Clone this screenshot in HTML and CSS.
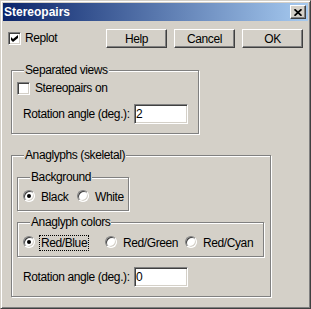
FILE: index.html
```html
<!DOCTYPE html>
<html lang="en">
<head>
  <meta charset="UTF-8" />
  <title>Stereopairs</title>
  <link rel="stylesheet" href="styles.css">
</head>
<body>

  <div class="window">
    <!-- title bar -->
    <div class="titlebar">
      <span class="title">Stereopairs</span>
      <button class="close">
        <svg width="8" height="7" viewBox="0 0 8 7">
          <path d="M0.5 0.3 L7.5 6.7 M7.5 0.3 L0.5 6.7" stroke="#000" stroke-width="1.8" fill="none" />
        </svg>
      </button>
    </div>

    <!-- replot + buttons -->
    <div class="top-row">
      <label class="check">
        <span class="box">
          <svg width="7" height="7" viewBox="0 0 7 7"><path d="M0 2 L2 4 L7 0 L7 3 L2 7 L0 5 Z" fill="#000" /></svg>
        </span>
        <span>Replot</span>
      </label>
      <div class="actions">
        <button class="btn">Help</button>
        <button class="btn">Cancel</button>
        <button class="btn">OK</button>
      </div>
    </div>

    <!-- separated views -->
    <div class="group sep">
      <div class="group-title">Separated views</div>
      <label class="check stereo">
        <span class="box"></span>
        <span>Stereopairs on</span>
      </label>
      <div class="field">
        <span>Rotation angle (deg.):</span>
        <input class="edit" type="text" value="2" readonly>
      </div>
    </div>

    <!-- anaglyphs -->
    <div class="group ana">
      <div class="group-title">Anaglyphs (skeletal)</div>

      <div class="group sub bg">
        <div class="group-title">Background</div>
        <div class="radios">
          <div class="opt"><span class="radio on"></span><span class="lbl">Black</span></div>
          <div class="opt"><span class="radio"></span><span class="lbl">White</span></div>
        </div>
      </div>

      <div class="group sub colors">
        <div class="group-title">Anaglyph colors</div>
        <div class="radios">
          <div class="opt"><span class="radio on"></span><span class="lbl focus">Red/Blue</span></div>
          <div class="opt"><span class="radio"></span><span class="lbl">Red/Green</span></div>
          <div class="opt"><span class="radio"></span><span class="lbl">Red/Cyan</span></div>
        </div>
      </div>

      <div class="field low">
        <span>Rotation angle (deg.):</span>
        <input class="edit" type="text" value="0" readonly>
      </div>
    </div>
  </div>

</body>
</html>
```

FILE: styles.css
```css
* {
  box-sizing: border-box;
}

body {
  margin: 0;
  font-family: "Liberation Sans", Arial, sans-serif;
  font-size: 12px;
  letter-spacing: -0.4px;
  color: #000;
  background: #d4d0c8;
}

/* window frame */
.window {
  width: 311px;
  height: 309px;
  background: #d4d0c8;
  border: 1px solid;
  border-color: #d4d0c8 #404040 #404040 #d4d0c8;
  box-shadow: inset 1px 1px #fff, inset -1px -1px #808080;
  padding: 2px;
}

.titlebar {
  height: 18px;
  display: flex;
  align-items: center;
  justify-content: space-between;
  padding: 0 2px 0 1px;
  background: linear-gradient(to right, #0a246a, #a6caf0);
  color: #fff;
}

.title {
  font-weight: bold;
  letter-spacing: 0;
  line-height: 18px;
}

.close {
  width: 16px;
  height: 14px;
  padding: 0;
  display: flex;
  align-items: center;
  justify-content: center;
  background: #d4d0c8;
  border: 1px solid;
  border-color: #fff #404040 #404040 #fff;
  box-shadow: inset -1px -1px #808080;
}

/* first row */
.top-row {
  display: flex;
  align-items: center;
  justify-content: space-between;
  height: 19px;
  margin-top: 8px;
  padding: 0 5px;
}

.actions {
  display: flex;
  gap: 7px;
}

.btn {
  width: 61px;
  height: 19px;
  padding: 0;
  font: inherit;
  letter-spacing: inherit;
  color: #000;
  background: #d4d0c8;
  border: 1px solid;
  border-color: #fff #404040 #404040 #fff;
  box-shadow: inset -1px -1px #808080;
}

/* checkbox */
.check {
  display: flex;
  align-items: center;
  gap: 4px;
  line-height: 13px;
}

.box {
  width: 13px;
  height: 13px;
  display: flex;
  align-items: center;
  justify-content: center;
  background: #fff;
  border: 1px solid;
  border-color: #808080 #fff #fff #808080;
  box-shadow: inset 1px 1px #404040, inset -1px -1px #d4d0c8;
}

/* group boxes */
.group {
  border: 1px solid #808080;
  box-shadow: inset 1px 1px #fff, 1px 1px #fff;
}

.group-title {
  width: max-content;
  margin: -7px 0 0 7px;
  padding: 0 1px;
  background: #d4d0c8;
  line-height: 13px;
}

.sep {
  width: 188px;
  margin: 22px 0 0 8px;
  padding: 0 0 9px 5px;
}

.stereo {
  margin-top: 5px;
  gap: 5px;
}

.field {
  display: flex;
  align-items: center;
  justify-content: space-between;
  width: 165px;
  margin: 9px 0 0 6px;
}

.field.low {
  margin-top: 10px;
}

.edit {
  width: 54px;
  height: 20px;
  padding: 0 1px;
  font: inherit;
  letter-spacing: 0;
  background: #fff;
  border: 1px solid;
  border-color: #808080 #fff #fff #808080;
  box-shadow: inset 1px 1px #404040, inset -1px -1px #d4d0c8;
  outline: none;
}

.ana {
  width: 260px;
  margin: 21px 0 0 8px;
  padding: 0 0 9px 5px;
}

.sub {
  padding: 0 0 5px 5px;
}

.bg {
  width: 112px;
  margin-top: 15px;
}

.colors {
  width: 247px;
  margin-top: 11px;
}

.bg .radios {
  margin-top: 5px;
  display: grid;
  grid-template-columns: 54px auto;
}

.colors .radios {
  margin-top: 6px;
  display: grid;
  grid-template-columns: 82px 80px auto;
}

/* radio buttons */
.opt {
  display: flex;
  align-items: flex-start;
}

.radio {
  position: relative;
  width: 12px;
  height: 12px;
  margin-top: 1px;
  border-radius: 50%;
  background: #fff;
  border: 1px solid;
  border-color: #808080 #fff #fff #808080;
  box-shadow: inset 1px 1px #404040, inset -1px -1px #d4d0c8;
}

.radio.on::after {
  content: "";
  position: absolute;
  left: 3px;
  top: 3px;
  width: 4px;
  height: 4px;
  border-radius: 50%;
  background: #000;
}

.lbl {
  margin-left: 4px;
  padding: 0 1px;
  line-height: 14px;
  border: 1px dotted transparent;
}

.lbl.focus {
  border-color: #000;
}
```
